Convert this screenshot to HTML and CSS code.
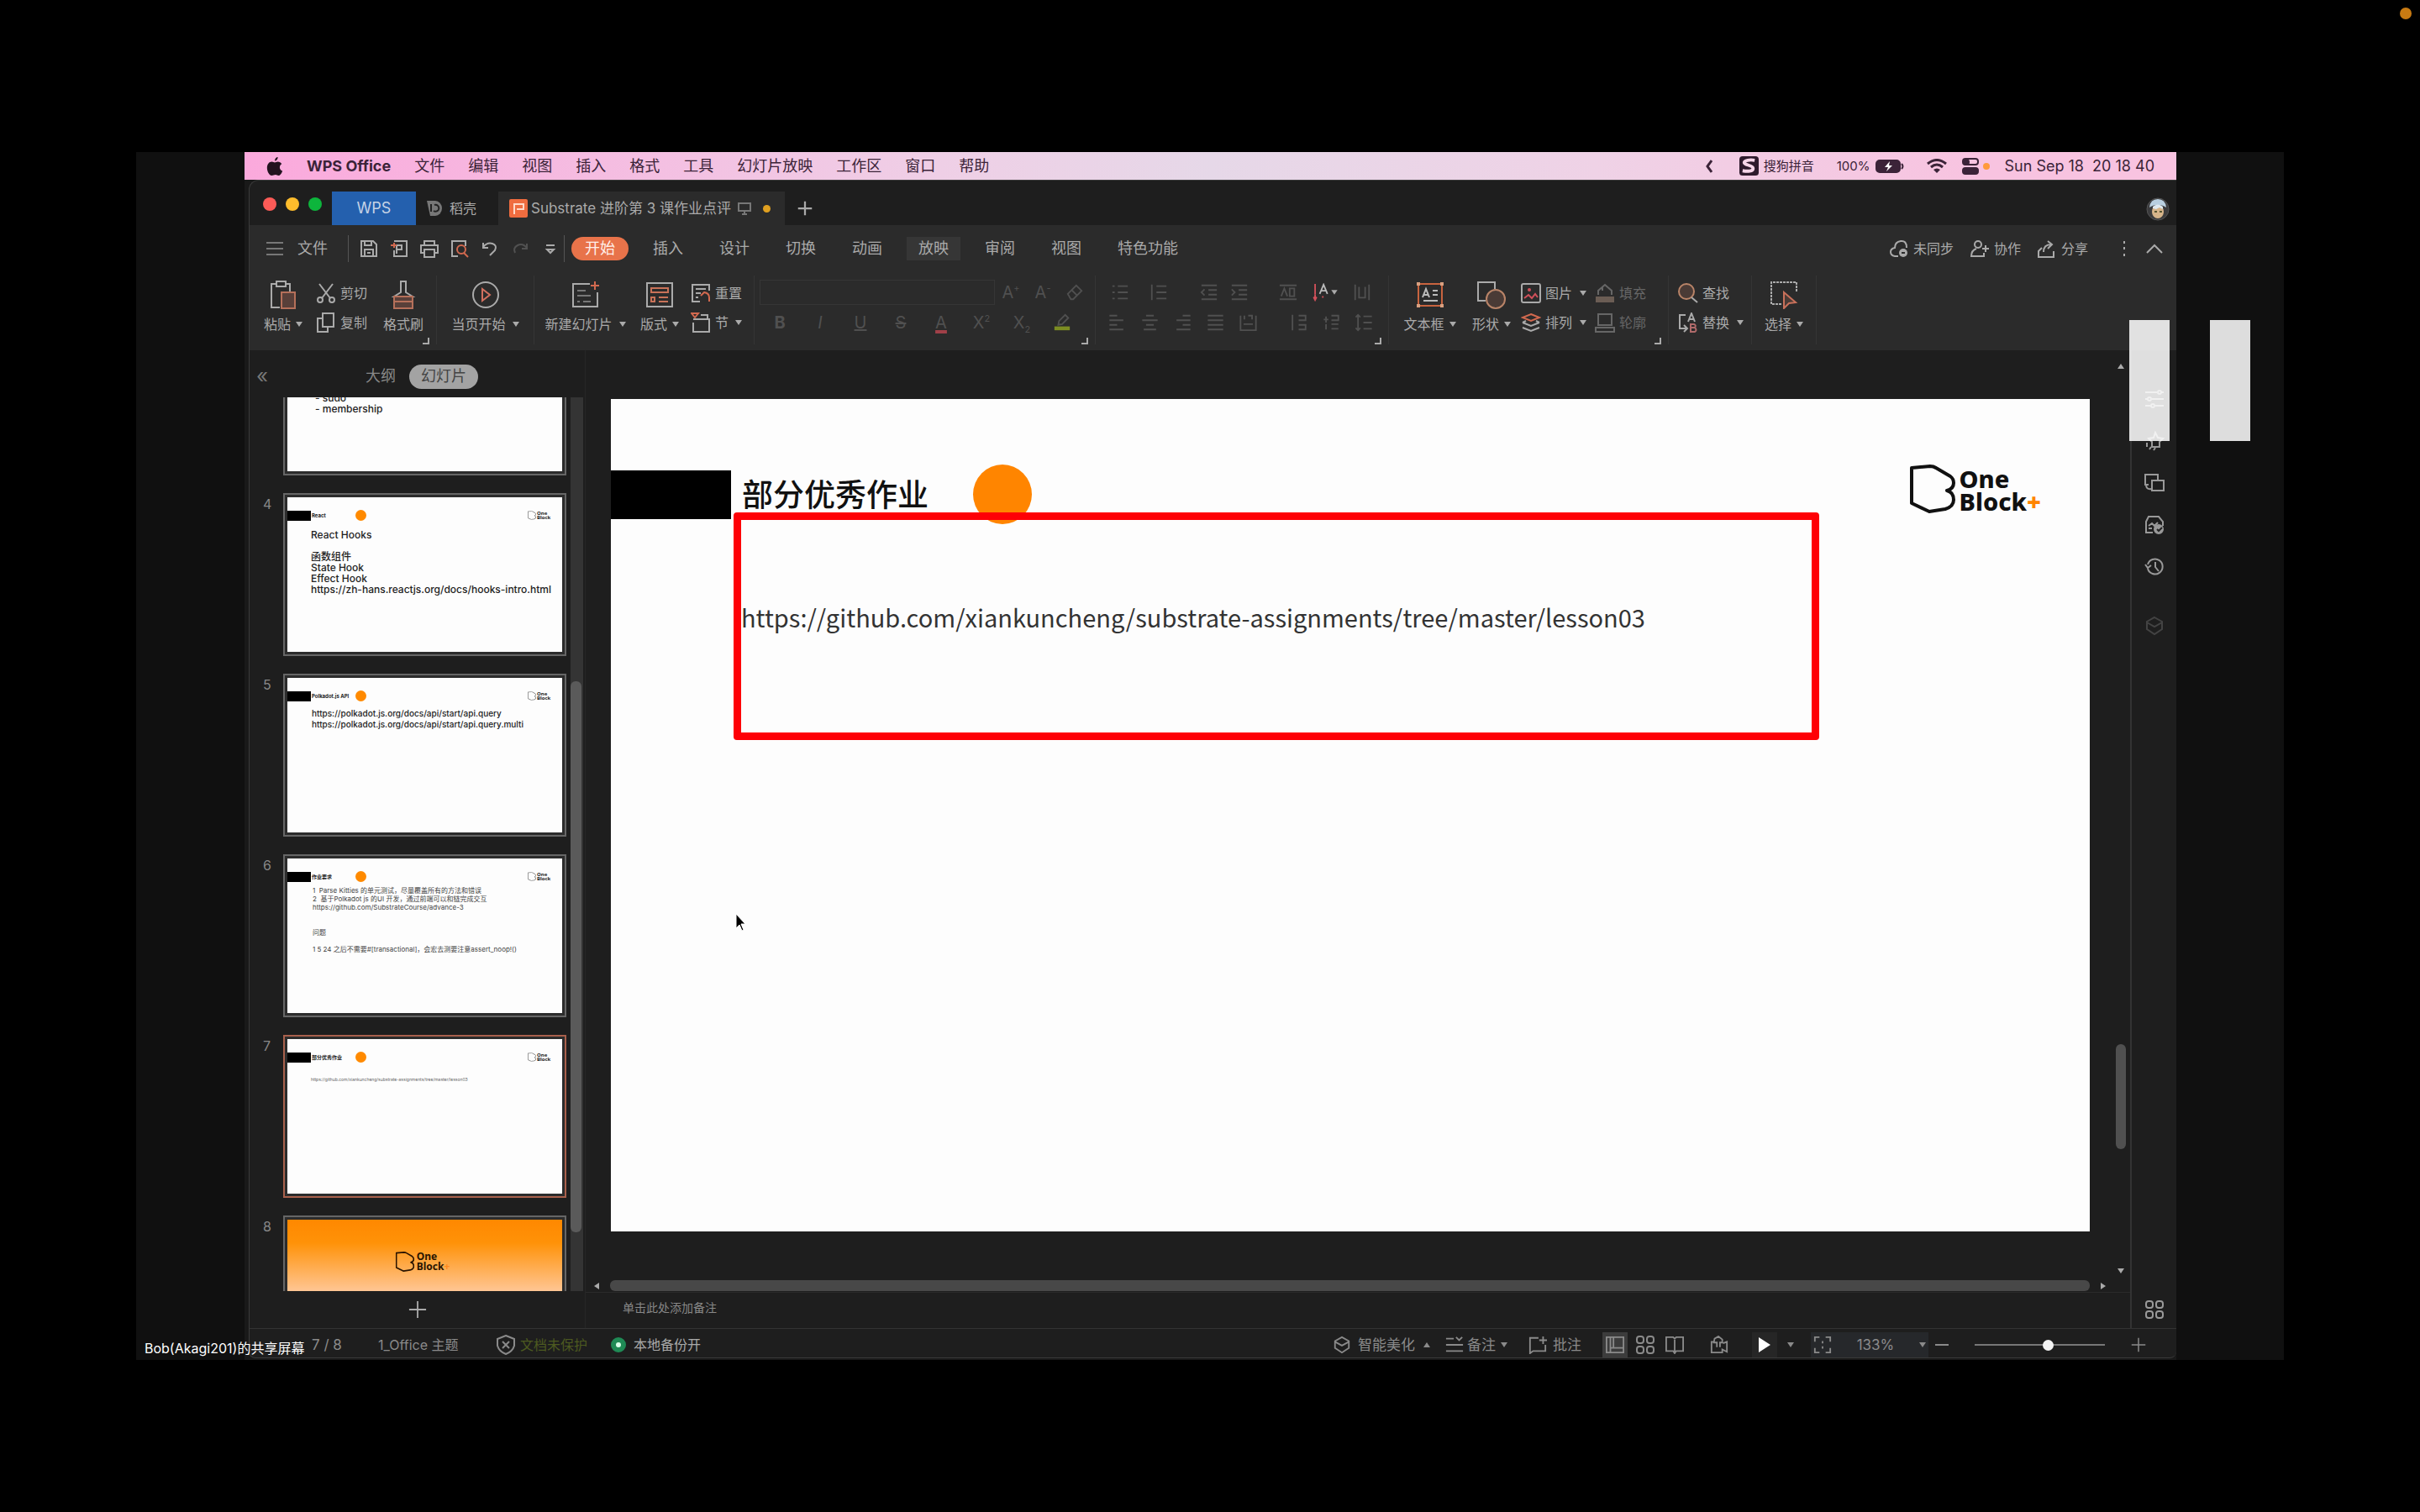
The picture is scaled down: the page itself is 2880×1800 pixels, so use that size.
FILE: index.html
```html
<!DOCTYPE html>
<html lang="zh-CN">
<head>
<meta charset="utf-8">
<title>Substrate 进阶第 3 课作业点评</title>
<link rel="stylesheet" href="styles.css">
</head>
<body>
<svg class="defs" aria-hidden="true">
  <symbol id="caret" viewBox="0 0 8 6"><path d="M0 0h8L4 6z" fill="currentColor" stroke="none"/></symbol>
  <symbol id="corner" viewBox="0 0 8 8"><path d="M7 0v7H0" /></symbol>
  <symbol id="plus" viewBox="0 0 24 24"><path d="M12 1v22M1 12h22"/></symbol>
  <symbol id="logo-mark" viewBox="0 0 54 58"><path d="M2 4 24 2q4 0 7 2l17 10q4 3 4 8 0 7-8 9 8 2 8 11 0 8-10 11L23 56 2 46z" fill="none" stroke-width="4" stroke-linejoin="round"/></symbol>
  <symbol id="four" viewBox="0 0 22 22"><rect x="1" y="1" width="8" height="8" rx="3"/><rect x="13" y="1" width="8" height="8" rx="3"/><rect x="1" y="13" width="8" height="8" rx="3"/><rect x="13" y="13" width="8" height="8" rx="3"/></symbol>
  <symbol id="cube" viewBox="0 0 24 24"><path d="M12 2l9 5v9l-9 6-9-6V7z M3 8l9 5 9-5"/></symbol>
</svg>

<span class="rec-dot"></span>

<main class="video">
  <div class="screen">
    <nav class="menubar">
      <svg class="apple" viewBox="0 0 20 24"><path d="M14 0c0 3-2 5-4 5 0-3 2-5 4-5zM10 7c1 0 2-1 4-1 2 0 4 1 5 3-4 2-3 8 1 9-1 3-3 6-5 6s-2-1-4-1-3 1-5 1C3 24 0 19 0 14c0-5 3-8 6-8 2 0 3 1 4 1z"/></svg>
      <b>WPS Office</b>
      <a href="#">文件</a><a href="#">编辑</a><a href="#">视图</a><a href="#">插入</a><a href="#">格式</a><a href="#">工具</a><a href="#">幻灯片放映</a><a href="#">工作区</a><a href="#">窗口</a><a href="#">帮助</a>
      <div class="tray">
        <svg class="t-chev" viewBox="0 0 8 16"><path d="M7 1 2 8l5 7"/></svg>
        <span class="ime"><svg viewBox="0 0 24 24"><rect width="24" height="24" rx="4" fill="#2e1a2c" stroke="none"/><path d="M19 5c-6-1-13 0-13 3s11 3 11 7-7 4-13 3" stroke="#f6d5e8" stroke-width="4"/></svg>搜狗拼音</span>
        <span class="batt">100%<svg viewBox="0 0 34 16"><rect x="1" y="1" width="28" height="14" rx="4" fill="#3b2338"/><path d="M31 5q3 3 0 6"/><path d="M17 2l-6 7h4l-2 5 7-7h-4z" fill="#fff" stroke="none"/></svg></span>
        <svg class="wifi" viewBox="0 0 24 18"><path d="M1 6q11-9 22 0M5 10q7-6 14 0" stroke-width="3"/><path d="M12 17l-4-4q4-3 8 0z" fill="currentColor" stroke="none"/></svg>
        <span class="cc"><svg viewBox="0 0 20 20"><rect x="1" y="1" width="18" height="7" rx="3"/><circle cx="5" cy="5" r="3" fill="currentColor"/><rect x="1" y="12" width="18" height="7" rx="3" fill="currentColor"/></svg><i></i></span>
        <time>Sun Sep 18&nbsp; 20 18 40</time>
      </div>
    </nav>

    <div class="window">
      <header class="titlebar">
        <div class="lights"><i class="red"></i><i class="yellow"></i><i class="green"></i></div>
        <button class="tab home">WPS</button>
        <button class="tab docer"><svg viewBox="0 0 18 20"><path d="M0 1h10a8 9 0 0 1 0 18H4z" fill="#777" stroke="none"/><path d="M5 5v9M9 6a4 4 0 1 1-1 7" stroke="#222"/></svg>稻壳</button>
        <button class="tab doc"><svg class="p-ico" viewBox="0 0 22 22"><rect width="22" height="22" rx="2" fill="#ef6c3f" stroke="none"/><path d="M6 18V6h11v6H9" stroke="#ffd9c8"/></svg>Substrate 进阶第 3 课作业点评<svg class="mon" viewBox="0 0 16 16"><path d="M1 2h14v9H1zM8 11v4M5 15h6"/></svg><i></i></button>
        <button class="newtab" aria-label="新建"><svg viewBox="0 0 24 24"><use href="#plus"/></svg></button>
        <svg class="avatar" viewBox="0 0 28 28"><circle cx="14" cy="14" r="13" fill="#3b3b3d" stroke="#555" stroke-width="1"/><path d="M4 12q1-10 10-10t10 10q-4-3-10-3T4 12z" fill="#b9cfe0" stroke="none"/><ellipse cx="14" cy="17" rx="7" ry="8" fill="#d6b48a" stroke="none"/><path d="M8 11q6-5 12 0v3l-4-2-4 2-4-1z" fill="#dfe9f0" stroke="none"/><path d="M10 17h3M16 17h3" stroke="#553"/></svg>
      </header>

      <section class="ribbon">
        <div class="tabsrow">
          <button class="filebtn"><svg viewBox="0 0 20 16"><path d="M0 1h20M0 8h20M0 15h20"/></svg>文件</button>
          <div class="quick">
            <svg viewBox="0 0 22 22"><path d="M2 2h14l4 4v14H2zM6 2v5h8V2M6 20v-8h10v8M9 16h4"/></svg>
            <svg viewBox="0 0 22 22"><path d="M5 2h15v18H5v-7M8 17V7h6v5h-5"/><path d="M1 7h7M5 4v6" stroke="#d2694f"/></svg>
            <svg viewBox="0 0 22 22"><path d="M5 7V2h12v5M5 16H1V7h20v9h-4M5 12h12v9H5z"/></svg>
            <svg viewBox="0 0 22 22"><path d="M9 20H2V2h16v6"/><circle cx="13" cy="12" r="5" stroke="#d2694f"/><path d="M16 16l5 5" stroke="#d2694f"/></svg>
            <svg viewBox="0 0 22 22"><path d="M3 4v6h6M3 9q5-6 11-4t3 8l-6 6"/></svg>
            <svg class="off" viewBox="0 0 22 22"><path d="M19 5v6h-6M19 10Q14 4 8 7t-3 9"/></svg>
            <svg viewBox="0 0 22 22"><path d="M6 7h10M7 12h8l-4 4z"/></svg>
          </div>
          <div class="rtabs"><button class="on">开始</button><button>插入</button><button>设计</button><button>切换</button><button>动画</button><button class="hover">放映</button><button>审阅</button><button>视图</button><button>特色功能</button></div>
          <div class="rright">
            <button><svg viewBox="0 0 22 22"><path d="M10 20H6q-5-1-5-5t5-5q0-7 7-8t7 8"/><circle cx="16" cy="16" r="5" fill="currentColor" stroke="none"/><path d="M14 16h4" stroke="#2b2b2b"/></svg>未同步</button>
            <button><svg viewBox="0 0 22 22"><circle cx="9" cy="6" r="4"/><path d="M7 11q-6 2-6 9h15v-4M18 7v8M14 11h8"/></svg>协作</button>
            <button><svg viewBox="0 0 22 22"><path d="M5 10l-4 4v7h18v-7M7 15q0-9 9-9M12 2l5 4-5 5"/></svg>分享</button>
            <svg class="dots" viewBox="0 0 4 20"><path d="M2 1v3M2 8v3M2 16v3"/></svg>
            <svg class="up" viewBox="0 0 20 12"><path d="M1 11 10 2l9 9"/></svg>
          </div>
        </div>

        <div class="tools">
          <div class="group g1">
            <button class="big paste"><svg viewBox="0 0 34 34"><path d="M13 32H3V4h7M19 4h6v9M9 1h11v6H9z"/><path d="M15 14h16v19H15z" fill="#59403a" stroke="#b5705a"/></svg><span>粘贴<svg class="car"><use href="#caret"/></svg></span></button>
            <div class="col cut">
              <button><svg viewBox="0 0 24 24"><path d="M4 1l13 17M20 1L7 18"/><circle cx="5" cy="20" r="3"/><circle cx="19" cy="20" r="3"/></svg>剪切</button>
              <button><svg viewBox="0 0 24 24"><path d="M8 1h13v16H8zM8 7H2v16h12v-6"/></svg>复制</button>
            </div>
            <button class="big brush"><svg viewBox="0 0 34 34"><path d="M14 14V1h6v13l8 5H6z"/><path d="M6 19h22v14H6z" fill="#59403a" stroke="#b5705a"/><path d="M6 25h22" stroke="#b5705a"/></svg><span>格式刷</span></button>
            <svg class="corner"><use href="#corner"/></svg>
          </div>
          <div class="group g2">
            <button class="big"><svg viewBox="0 0 34 34"><circle cx="17" cy="17" r="15"/><path d="M13 10v14l9-7z" stroke="#d2705f"/></svg><span>当页开始<svg class="car far"><use href="#caret"/></svg></span></button>
          </div>
          <div class="group g3">
            <button class="big newslide"><svg viewBox="0 0 34 34"><path d="M22 4H2v27h29V14"/><path d="M7 12h10M7 18h16M7 25h3M14 25h9" stroke="#777"/><path d="M28 1v10M23 6h10" stroke="#d2694f"/></svg><span>新建幻灯片<svg class="car far"><use href="#caret"/></svg></span></button>
            <button class="big layout"><svg viewBox="0 0 34 34"><path d="M2 3h30v28H2z"/><path d="M7 9h20v5H7zM7 20h4v5H7zM16 20h11M16 25h11" stroke="#c87258"/></svg><span>版式<svg class="car"><use href="#caret"/></svg></span></button>
            <div class="col reset">
              <button><svg viewBox="0 0 24 24"><path d="M11 22H2V2h20v7M6 7h12M6 12h6M6 17h3"/><path d="M12 15l4-4q6 1 6 6v5" stroke="#d2694f"/></svg>重置</button>
              <button><svg viewBox="0 0 24 24"><path d="M3 12v11h19V8H3M12 3h8v5"/><path d="M1 1h8L5 6z" stroke="#d2694f"/></svg>节<svg class="car"><use href="#caret"/></svg></button>
            </div>
          </div>
          <div class="group g4">
            <div class="line"><input class="fontbox" aria-label="字体"><span class="cells w38 dim"><span>A<sup>+</sup></span><span>A<sup>-</sup></span><svg viewBox="0 0 24 24"><path d="M3 14 14 3l7 7-11 11H7zM8 9l7 7"/></svg></span></div>
            <div class="line cells w48 dim"><b>B</b><em>I</em><u>U</u><s>S</s><span class="fc">A</span><span>X<sup>2</sup></span><span>X<sub>2</sub></span><svg viewBox="0 0 24 24"><path d="M7 15l1-5 8-8 4 4-8 8z"/><path d="M2 17h20v5H2z" fill="#7c8c22" stroke="none"/></svg></div>
            <svg class="corner"><use href="#corner"/></svg>
          </div>
          <div class="group g5">
            <div class="line spread dim">
              <span class="cells w46"><svg viewBox="0 0 24 24"><path d="M2 4h3M9 4h13M2 12h3M9 12h13M2 20h3M9 20h13"/></svg><svg viewBox="0 0 24 24"><path d="M3 2v20M9 4h13M9 12h13M9 20h13"/></svg></span>
              <span class="cells w36"><svg viewBox="0 0 24 24"><path d="M2 3h20M11 9h11M11 15h11M2 21h20M6 8l-4 4 4 4"/></svg><svg viewBox="0 0 24 24"><path d="M2 3h20M11 9h11M11 15h11M2 21h20M2 8l4 4-4 4"/></svg></span>
              <span class="cells w40"><svg viewBox="0 0 24 24"><path d="M1 3h22M1 21h22M3 17l4-10 4 10M14 7v10h6V7z"/></svg><svg class="lit" viewBox="0 0 32 24"><path d="M3 1v14M13 17v2" stroke="#d2505a"/><path d="M3 15v6M1 18l2 4 2-4" stroke="#d2505a"/><path d="M9 14l5-12 5 12M11 10h6" stroke="#bbb"/><path d="M24 9h8l-4 6z" fill="#aaa" stroke="none"/></svg><svg viewBox="0 0 24 24"><path d="M3 2v20M21 2v20M8 5v14h8V5"/></svg></span>
            </div>
            <div class="line spread dim">
              <span class="cells w39"><svg viewBox="0 0 24 24"><path d="M2 3h10M2 9h18M2 15h10M2 21h18"/></svg><svg viewBox="0 0 24 24"><path d="M7 3h10M2 9h20M7 15h10M4 21h16"/></svg><svg viewBox="0 0 24 24"><path d="M12 3h10M4 9h18M12 15h10M4 21h18"/></svg><svg viewBox="0 0 24 24"><path d="M2 3h20M2 9h20M2 15h20M2 21h20"/></svg><svg viewBox="0 0 24 24"><path d="M2 3v19h20V3M7 3v5M12 3h5v5M6 14h12"/></svg></span>
              <span class="cells w39"><svg viewBox="0 0 24 24"><path d="M4 2v20M12 3h9v6h-9M12 15h9v6h-9"/></svg><svg viewBox="0 0 24 24"><path d="M2 8h6M5 4v8M12 3h9v6h-9M12 14h9M5 14v7M12 20h9"/></svg><svg viewBox="0 0 24 24"><path d="M4 2v20M1 5l3-3 3 3M1 19l3 3 3-3M11 4h11M11 12h11M11 20h11"/></svg></span>
            </div>
            <svg class="corner"><use href="#corner"/></svg>
          </div>
          <div class="group g6">
            <button class="big textbox"><svg viewBox="0 0 34 34"><path d="M3 4h28v26H3z" stroke="#c8643f"/><path d="M1 2h4v4H1zM29 2h4v4h-4zM1 28h4v4H1zM29 28h4v4h-4z" fill="#d8a080" stroke="none"/><path d="M8 20l4-10 4 10M10 17h5M20 12h6M20 17h6M9 24h17" stroke="#bbb"/></svg><span>文本框<svg class="car"><use href="#caret"/></svg></span></button>
            <button class="big shape"><svg viewBox="0 0 34 34"><path d="M10 24H1V2h20v8"/><circle cx="22" cy="22" r="11" fill="#4a3b36" stroke="#b98468"/></svg><span>形状<svg class="car"><use href="#caret"/></svg></span></button>
            <div class="col pic">
              <button><svg viewBox="0 0 24 24"><rect x="1" y="1" width="22" height="22" rx="2"/><circle cx="10" cy="8" r="2" fill="#d2505a" stroke="none"/><path d="M4 18l5-4 4 4 4-5 3 4" stroke="#d2505a"/></svg>图片<svg class="car far"><use href="#caret"/></svg></button>
              <button><svg viewBox="0 0 24 24"><path d="M12 2l10 4-10 4L2 6z" stroke="#d2694f"/><path d="M2 12l10 4 10-4M2 18l10 4 10-4M2 12l4-2M22 12l-4-2"/></svg>排列<svg class="car far"><use href="#caret"/></svg></button>
            </div>
            <div class="col fill">
              <button disabled><svg viewBox="0 0 24 24"><path d="M4 14V9l8-7 8 7v5M9 5v4"/><path d="M1 16h22v7H1z" fill="#6b5d54" stroke="none"/></svg>填充</button>
              <button disabled><svg viewBox="0 0 24 24"><path d="M4 15V2h16v13zM1 18h22v5H1z"/></svg>轮廓</button>
            </div>
            <svg class="corner"><use href="#corner"/></svg>
          </div>
          <div class="group g7">
            <div class="col find">
              <button><svg viewBox="0 0 24 24"><circle cx="10" cy="10" r="9" fill="#4a3b36" stroke="#b98468"/><path d="M16 17l7 6"/></svg>查找</button>
              <button><svg viewBox="0 0 24 24"><path d="M9 3H2v16h8M7 15l4 4-4 4M12 11l4-10 4 10M14 8h4"/><path d="M15 14v9h5q3-2 0-5 2-3-1-4zM15 18h5" stroke="#b06a6a"/></svg>替换<svg class="car far"><use href="#caret"/></svg></button>
            </div>
          </div>
          <div class="group g8">
            <button class="big"><svg viewBox="0 0 34 34"><path d="M14 28H2V2h30v12" stroke-dasharray="3 1"/><path d="M17 14l14 12-8 1-6 6z" fill="#4a3b36" stroke="#c8705a"/></svg><span>选择<svg class="car"><use href="#caret"/></svg></span></button>
          </div>
        </div>
      </section>

      <div class="work">
        <div class="center">
          <aside class="panel">
            <div class="ptabs"><span class="fold">«</span><button>大纲</button><button class="on">幻灯片</button></div>
            <div class="plist">
              <ol class="thumbs">
                <li class="cut-top"><span></span><div class="thumb"><div class="paper mem">- sudo<br>- membership</div></div></li>
                <li><span>4</span><div class="thumb"><div class="paper"><div class="head"><i class="bar"></i><b>React</b><i class="dot"></i><svg class="mini" viewBox="0 0 54 58"><use href="#logo-mark"/></svg><em>One<br>Block</em></div>
                  <p class="t4">React Hooks<br><br>函数组件<br>State Hook<br>Effect Hook<br>https://zh-hans.reactjs.org/docs/hooks-intro.html</p></div></div></li>
                <li><span>5</span><div class="thumb"><div class="paper"><div class="head"><i class="bar"></i><b>Polkadot.js API</b><i class="dot"></i><svg class="mini" viewBox="0 0 54 58"><use href="#logo-mark"/></svg><em>One<br>Block</em></div>
                  <p class="t5">https://polkadot.js.org/docs/api/start/api.query<br>https://polkadot.js.org/docs/api/start/api.query.multi</p></div></div></li>
                <li><span>6</span><div class="thumb"><div class="paper"><div class="head"><i class="bar"></i><b>作业要求</b><i class="dot"></i><svg class="mini" viewBox="0 0 54 58"><use href="#logo-mark"/></svg><em>One<br>Block</em></div>
                  <div class="t6"><p>1&nbsp; Parse Kitties 的单元测试，尽量覆盖所有的方法和错误<br>2&nbsp; 基于Polkadot js 的UI 开发，通过前端可以和链完成交互<br>https://github.com/SubstrateCourse/advance-3</p><p>问题</p><p>1 5 24 之后不需要#[transactional]，会宏去测要注意assert_noop!()</p></div></div></div></li>
                <li class="sel"><span>7</span><div class="thumb"><div class="paper"><div class="head"><i class="bar"></i><b>部分优秀作业</b><i class="dot"></i><svg class="mini" viewBox="0 0 54 58"><use href="#logo-mark"/></svg><em>One<br>Block</em></div>
                  <p class="t7">https://github.com/xiankuncheng/substrate-assignments/tree/master/lesson03</p></div></div></li>
                <li><span>8</span><div class="thumb"><div class="paper cover"><svg viewBox="0 0 54 58"><use href="#logo-mark"/></svg><b>One<br>Block<i>+</i></b></div></div></li>
              </ol>
              <div class="vtrack"><i></i></div>
            </div>
            <button class="add" aria-label="新建幻灯片"><svg viewBox="0 0 24 24"><use href="#plus"/></svg></button>
          </aside>

          <section class="stage">
            <div class="canvas">
              <article class="slide">
                <div class="shead"><i class="bar"></i><h1>部分优秀作业</h1><i class="dot"></i>
                  <div class="brand"><svg viewBox="0 0 54 58"><use href="#logo-mark"/></svg><b>One<br>Block<i>+</i></b></div></div>
                <a class="url" href="#">https://github.com/xiankuncheng/substrate-assignments/tree/master/lesson03</a>
                <div class="mark"></div>
                <svg class="cursor" viewBox="0 0 12 22"><path d="M1 1v17l4-4 3 7 2-1-3-7h5z" fill="#000" stroke="#fff" stroke-width="1"/></svg>
              </article>
              <div class="vbar"><svg class="tri flip"><use href="#caret"/></svg><i></i><svg class="tri"><use href="#caret"/></svg></div>
            </div>
            <div class="hbar"><svg class="tri left"><use href="#caret"/></svg><i></i><svg class="tri right"><use href="#caret"/></svg></div>
            <div class="notes">单击此处添加备注</div>
          </section>

          <aside class="side">
            <svg viewBox="0 0 24 24"><path d="M1 4h14M19 4h4M1 12h3M9 12h14M1 20h7M13 20h10"/><circle cx="18" cy="4" r="2"/><circle cx="6" cy="12" r="2"/><circle cx="10" cy="20" r="2"/></svg>
            <svg viewBox="0 0 24 24"><path d="M13 2l3 6 6 1-4 4v6h-9v-6L5 9l6-1zM3 14v5M6 22l2-3M11 23l2-3"/></svg>
            <svg viewBox="0 0 24 24"><path d="M9 9h14v12H9zM5 14H1V2h15v7M2 14q0 6 6 5"/></svg>
            <svg viewBox="0 0 24 24"><path d="M10 21H2V8l3-6h12l5 6v5M5 13l4-3 3 3 4-4M5 16h4"/><circle cx="17" cy="17" r="5" fill="#999"/><path d="M15 17l2 2 4-4" stroke="#222"/></svg>
            <svg viewBox="0 0 24 24"><path d="M4 14a9 9 0 1 0 0-5M1 9l3 4 4-3M13 6v6l4 5"/></svg>
            <svg class="faint" viewBox="0 0 24 24"><use href="#cube"/></svg>
            <svg class="last" viewBox="0 0 22 22"><use href="#four"/></svg>
          </aside>
        </div>

        <footer class="status">
          <span class="page">7 / 8</span><span class="theme">1_Office 主题</span>
          <span class="prot"><svg viewBox="0 0 24 24"><path d="M12 1l10 4v8q-2 7-10 10Q4 20 2 13V5zM8 8l8 8M16 8l-8 8"/></svg>文档未保护</span>
          <span class="bak"><i></i>本地备份开</span>
          <div class="sright">
            <button class="s1"><svg viewBox="0 0 24 24"><use href="#cube"/></svg>智能美化<svg class="car flip"><use href="#caret"/></svg></button>
            <button class="s2"><svg viewBox="0 0 24 24"><path d="M1 4h10M1 12h22M1 20h22M14 2l4 4 4-4"/></svg>备注<svg class="car"><use href="#caret"/></svg></button>
            <button class="s3"><svg viewBox="0 0 24 24"><path d="M13 3H2v20l4-3h16v-8M19 1v10M14 6h10"/></svg>批注</button>
            <button class="s4" aria-label="普通视图"><svg viewBox="0 0 24 24"><path d="M1 2h22v20H1zM6 2v20M6 16h17M10 2v14"/></svg></button>
            <button class="s5" aria-label="浏览"><svg viewBox="0 0 22 22"><use href="#four"/></svg></button>
            <button class="s6" aria-label="阅读"><svg viewBox="0 0 24 24"><path d="M1 2h9l2 2 2-2h9v18h-9l-2 3-2-3H1zM12 4v18"/></svg></button>
            <button class="s7" aria-label="录制"><svg viewBox="0 0 24 24"><path d="M5 8H2v14h14v-4l6 3V8l-5 2M9 15V9H5l1-5 5-3 5 4v4h-3v6"/></svg></button>
            <button class="s8" aria-label="放映"><svg viewBox="0 0 14 18"><path d="M0 0l14 9-14 9z" fill="#fff" stroke="none"/></svg></button>
            <svg class="car s9"><use href="#caret"/></svg>
            <button class="zoomb"><svg viewBox="0 0 24 24"><path d="M8 2H2v6M16 2h6v6M2 16v6h6M22 16v6h-6M12 7v3M12 14v3"/></svg><span>133%</span><svg class="car"><use href="#caret"/></svg></button>
            <button class="sm" aria-label="缩小"><svg viewBox="0 0 18 18"><path d="M1 9h16"/></svg></button>
            <input type="range" min="0" max="100" value="57" aria-label="缩放">
            <button class="sp" aria-label="放大"><svg viewBox="0 0 24 24"><use href="#plus"/></svg></button>
          </div>
        </footer>
      </div>
    </div>
  </div>
  <div class="sharer">Bob(Akagi201)的共享屏幕</div>
  <button class="pause" aria-label="暂停"><i></i><i></i></button>
</main>
</body>
</html>
```

FILE: styles.css
```css
* { box-sizing: border-box; }
body {
  margin: 0; height: 100vh; padding: 181px 162px;
  display: flex; background: #000; color: #aaa;
  font: 16px/20px Inter, "Noto Sans CJK SC", sans-serif;
}
button { border: 0; padding: 0; background: none; color: inherit; font: inherit; display: flex; align-items: center; white-space: nowrap; }
a { color: inherit; text-decoration: none; }
svg { fill: none; stroke: currentColor; stroke-width: 2; flex: none; display: block; }
p, h1, ol { margin: 0; padding: 0; }
.defs { position: absolute; width: 0; height: 0; }
.rec-dot { position: absolute; top: 9px; right: 10px; width: 14px; height: 14px; border-radius: 50%; background: #c87a12; }

.video { position: relative; flex: 1; min-width: 0; display: flex; padding: 0 128px 0 129px; background: #101010; }
.screen { flex: 1; min-width: 0; display: flex; flex-direction: column; background: #191919; }

.menubar {
  height: 33px; display: flex; align-items: center; gap: 28px; padding: 0 26px;
  background: linear-gradient(90deg, #fba9dc, #efcfe6 36%, #e6d8e8 50%, #efd2e6 70%, #f8c3e0 90%);
  color: #3b2338; font-size: 18px; white-space: nowrap;
}
.apple { width: 20px; height: 22px; fill: #22121f; stroke: none; }
.menubar b { font-size: 18px; }
.tray { margin-left: auto; display: flex; align-items: center; }
.t-chev { width: 8px; height: 16px; margin-right: 32px; stroke-width: 3; }
.ime { display: flex; align-items: center; gap: 6px; font-size: 15px; margin-right: 27px; }
.ime svg { width: 23px; height: 23px; }
.batt { display: flex; align-items: center; gap: 6px; font-size: 15px; margin-right: 27px; }
.batt svg { width: 34px; height: 16px; }
.wifi { width: 24px; height: 18px; margin-right: 18px; }
.cc { display: flex; align-items: center; gap: 5px; margin-right: 18px; }
.cc svg { width: 20px; height: 20px; }
.cc i { width: 8px; height: 8px; border-radius: 50%; background: #ff9a3c; }

.window { flex: 1; min-height: 0; display: flex; flex-direction: column; margin: 0 0 2px 5px; border: 1px solid #3a3a3a; border-right: 0; border-radius: 12px 0 8px 8px; background: #1e1e1e; overflow: hidden; }
.titlebar { height: 53px; display: flex; align-items: flex-end; padding: 0 8px 0 16px; }
.lights { display: flex; gap: 11px; width: 82px; height: 33px; }
.lights i { width: 16px; height: 16px; border-radius: 50%; }
.red { background: #fc5b57; } .yellow { background: #fdbc2c; } .green { background: #0db53c; }
.tab { height: 40px; }
.home { width: 100px; justify-content: center; background: #2460ae; color: #c6d3e6; font-size: 18px; }
.docer { width: 98px; padding-left: 13px; gap: 9px; }
.docer svg { width: 18px; height: 20px; }
.doc { width: 341px; padding-left: 13px; gap: 4px; background: #2b2b2b; font-size: 17px; }
.p-ico { width: 22px; height: 24px; }
.mon { width: 16px; height: 18px; margin-left: 4px; stroke: #777; }
.doc i { width: 9px; height: 9px; border-radius: 50%; background: #e0a020; margin-left: 10px; }
.newtab { height: 40px; padding-left: 15px; }
.newtab svg { width: 18px; height: 18px; stroke-width: 3; }
.avatar { width: 28px; height: 28px; margin: 0 0 5px auto; }

.ribbon { background: #2b2b2b; height: 149px; flex: none; }
.tabsrow { height: 56px; display: flex; align-items: center; padding-right: 16px; font-size: 18px; }
.filebtn { width: 118px; height: 32px; padding-left: 20px; gap: 17px; border-right: 1px solid #555; }
.filebtn svg { width: 20px; height: 16px; stroke: #777; }
.quick { width: 257px; height: 32px; display: flex; align-items: center; gap: 14px; padding-left: 13px; border-right: 1px solid #555; }
.quick svg { width: 22px; height: 22px; }
.off { opacity: .3; }
.rtabs { display: flex; gap: 15px; padding-left: 8px; }
.rtabs button { height: 28px; padding: 0 14px; }
.rtabs .on { background: #e8734a; color: #fff0ea; border-radius: 14px; padding: 0 16px; }
.rtabs .hover { background: #363636; }
.rright { margin-left: auto; display: flex; align-items: center; gap: 20px; font-size: 16px; }
.rright button { gap: 6px; }
.rright svg { width: 22px; height: 22px; }
.rright .dots { width: 4px; height: 20px; margin: 0 4px 0 21px; }
.rright .up { width: 20px; height: 12px; }

.tools { display: flex; height: 86px; padding: 4px 0 0 8px; }
.group { position: relative; display: flex; border-right: 1px solid #353535; }
.corner { position: absolute; right: 8px; bottom: 0; width: 8px; height: 8px; }
.big { height: 70px; flex: 1; flex-direction: column; justify-content: flex-end; gap: 6px; line-height: 20px; }
.big > svg { width: 34px; height: 34px; }
.big > span { display: flex; align-items: center; line-height: 24px; }
.car { width: 8px; height: 6px; margin-left: 6px; }
.far { margin-left: 8px; }
.col { display: flex; flex-direction: column; padding-top: 8px; gap: 9px; }
.col button { height: 26px; gap: 5px; }
.col button > svg:first-child { width: 24px; height: 24px; }
.col button .car { margin-left: 3px; }
.col button .far { margin-left: 4px; }
.col button:disabled { color: #666; }
.g1 { width: 215px; padding-right: 6px; }
.paste { flex: 0 0 64px; }
.cut { width: 78px; padding-left: 7px; }
.g2 { width: 116px; }
.g3 { width: 262px; }
.layout { flex: 0 0 56px; }
.reset { width: 84px; padding-left: 9px; }
.g4 { width: 406px; flex-direction: column; padding: 5px 0 0 6px; gap: 6px; }
.line { display: flex; height: 30px; align-items: center; }
.fontbox { width: 280px; height: 30px; border: 1px solid #363636; background: #2b2b2b; color: #888; font: inherit; }
.cells { display: flex; align-items: center; }
.cells > * { text-align: center; height: 22px; line-height: 22px; font-size: 20px; }
.cells sup, .cells sub { font-size: 11px; line-height: 0; }
.w38 > * { width: 38px; } .w48 > * { width: 48px; } .w46 > * { width: 46px; }
.w36 > * { width: 36px; } .w40 > * { width: 44px; } .w39 > * { width: 39px; }
.dim { color: #505050; }
.fc { text-decoration: underline 4px #a04048; }
.g5 { width: 349px; flex-direction: column; padding: 5px 9px 0 6px; gap: 6px; }
.spread { justify-content: space-between; }
.g6 { width: 333px; }
.shape { flex: 0 0 50px; }
.pic { width: 98px; padding-left: 10px; }
.fill { width: 87px; }
.g7 { width: 99px; padding-left: 11px; }
.g8 { width: 77px; }

.work { flex: 1; min-height: 0; display: flex; flex-direction: column; }
.center { flex: 1; min-height: 0; display: flex; }
.panel { width: 400px; min-height: 0; display: flex; flex-direction: column; border-right: 1px solid #262626; }
.ptabs { display: flex; flex: none; align-items: center; height: 56px; padding: 6px 0 0 8px; font-size: 18px; color: #888; }
.fold { width: 130px; font-size: 24px; color: #777; }
.ptabs .on { height: 29px; margin-left: 16px; padding: 0 14px; border-radius: 15px; background: #a3a3a3; color: #444; }
.plist { flex: 1; min-height: 0; display: flex; overflow: hidden; }
.thumbs { flex: 1; list-style: none; display: flex; flex-direction: column; gap: 21px; padding-left: 16px; }
.thumbs li { display: flex; flex: none; height: 194px; color: #888; }
.thumbs li > span { width: 24px; padding-top: 3px; }
.thumb { width: 337px; border: 2px solid #666; padding: 3px; background: #2c2c2c; }
.sel .thumb { border-color: #a8604c; }
.paper { height: 100%; background: #fdfdfd; color: #222; overflow: hidden; padding-top: 15px; }
.thumbs .cut-top { height: 93px; }
.cut-top .thumb { border-top: 0; padding-top: 0; }
.cut-top .paper { padding: 0 0 0 33px; font: 500 12px/13px Inter, sans-serif; }
.cut-top .paper::before { content: ""; display: block; margin-top: -6px; }
.head { display: flex; align-items: center; height: 13px; padding-right: 10px; }
.head .bar { width: 28px; height: 12px; background: #000; }
.head b { width: 53px; padding-left: 1px; font-size: 6px; line-height: 12px; white-space: nowrap; }
.head .dot { width: 13px; height: 13px; border-radius: 50%; background: #ff8a00; }
.head .mini { width: 10px; height: 11px; margin: 0 1px 0 auto; stroke: #666; }
.head em { width: 20px; font: bold 6px/5px "Noto Sans", sans-serif; }
.t4 { padding: 10px 0 0 28px; font: 500 12px/13px Inter, "Noto Sans CJK SC", sans-serif; white-space: nowrap; }
.t5 { padding: 8px 0 0 29px; font: 500 10px/13px Inter, sans-serif; white-space: nowrap; }
.t6 { padding: 5px 0 0 30px; font: 8px/10px Inter, "Noto Sans CJK SC", sans-serif; color: #444; white-space: nowrap; display: flex; flex-direction: column; gap: 20px; }
.t6 p:last-child { margin-top: -10px; }
.t7 { padding: 15px 0 0 28px; font: 5px/10px Inter, sans-serif; color: #666; white-space: nowrap; }
.cover { display: flex; align-items: flex-start; justify-content: center; gap: 2px; padding-top: 38px; color: #2b1500; background: linear-gradient(#ff8800, #ff9208 15%, #ffc797 47%, #fff); }
.cover svg { width: 24px; height: 24px; }
.cover b { font: bold 12px/12px "Noto Sans", sans-serif; padding-right: 6px; }
.cover b i { font-style: normal; color: #ff8a1c; }
.vtrack { width: 15px; margin-right: 2px; background: #343434; padding-top: 338px; }
.vtrack i { display: block; width: 13px; height: 656px; border-radius: 6px; background: #5a5a5a; }
.add { height: 44px; flex: none; padding-left: 189px; }
.add svg { width: 22px; height: 22px; }

.stage { flex: 1; min-width: 0; min-height: 0; display: flex; flex-direction: column; }
.canvas { flex: 1; min-height: 0; display: flex; padding: 0 4px 0 30px; justify-content: space-between; gap: 30px; }
.slide { position: relative; flex: 1; align-self: flex-start; aspect-ratio: 1760 / 991; margin-top: 58px; padding-top: 78px; background: #fdfdfd; color: #111; }
.shead { display: flex; align-items: center; padding-right: 58px; }
.shead .bar { width: 143px; height: 58px; background: #000; }
.shead h1 { width: 288px; padding: 0 0 4px 13px; font: 500 37px/48px "Noto Sans CJK SC", sans-serif; }
.shead .dot { width: 70px; height: 71px; border-radius: 50%; background: #ff8500; }
.brand { align-self: flex-start; margin-left: auto; display: flex; gap: 5px; }
.brand svg { width: 54px; height: 58px; }
.brand b { font: 800 29px/27px "Noto Sans", sans-serif; padding-top: 3px; }
.brand b i { font-style: normal; font-weight: 900; color: #ff8500; }
.url { display: block; padding: 90px 0 0 155px; font: 29px/40px "Noto Sans CJK SC", sans-serif; color: #333; white-space: nowrap; }
.mark { position: absolute; left: 8.3%; top: 13.6%; width: 73.4%; height: 27.4%; border: 9px solid #fe0006; border-radius: 4px; }
.cursor { position: absolute; left: 8.4%; top: 61.8%; width: 12px; height: 22px; }
.vbar { width: 14px; display: flex; flex-direction: column; align-items: center; padding: 16px 0 7px; }
.vbar i { width: 12px; height: 125px; margin: auto 0 142px; border-radius: 6px; background: #505050; }
.tri { width: 8px; height: 6px; }
.flip { transform: rotate(180deg); }
.left { transform: rotate(90deg); }
.right { transform: rotate(-90deg); }
.hbar { height: 16px; flex: none; display: flex; align-items: center; gap: 12px; padding: 0 28px 0 9px; border-bottom: 1px solid #2a2a2a; }
.hbar i { flex: 1; height: 13px; border-radius: 6px; background: #484848; }
.notes { height: 42px; flex: none; padding: 8px 0 0 44px; font-size: 14px; color: #888; }
.side { width: 55px; display: flex; flex-direction: column; align-items: center; gap: 26px; padding: 46px 0 11px; border-left: 2px solid #333; color: #999; }
.side svg { width: 24px; height: 24px; }
.side .faint { opacity: .3; margin-top: 20px; }
.side .last { margin-top: auto; width: 22px; height: 22px; }

.status { height: 35px; flex: none; display: flex; align-items: center; padding: 4px 5px 0 74px; border-top: 1px solid #333; color: #8a8a8a; white-space: nowrap; }
.page { width: 79px; font-size: 17px; }
.theme { width: 140px; }
.prot { width: 137px; display: flex; align-items: center; gap: 5px; color: #4d5a20; }
.prot svg { width: 24px; height: 24px; stroke: #8a8a8a; }
.bak { display: flex; align-items: center; gap: 9px; color: #aaa; }
.bak i { width: 18px; height: 18px; border-radius: 50%; border: 6px solid #1f8a55; background: #d8ffe8; }
.sright { margin-left: auto; display: flex; align-items: center; font-size: 17px; }
.sright button { height: 30px; justify-content: center; }
.sright button > svg:first-child { width: 22px; height: 22px; }
.sright .s1 { width: 134px; justify-content: flex-start; gap: 8px; }
.sright .s2 { width: 99px; justify-content: flex-start; gap: 4px; }
.sright .s3 { width: 88px; justify-content: flex-start; gap: 7px; }
.s1 .car, .s2 .car { margin-left: 2px; }
.s4 { width: 30px; background: #3c3c3c; }
.s5 { width: 42px; } .s6 { width: 28px; } .s7 { width: 78px; }
.s8 { width: 30px; background: #262626; }
.sright .s8 > svg:first-child { width: 14px; height: 18px; }
.s9 { margin: 0 20px 0 12px; }
.zoomb { width: 140px; background: #26282b; }
.zoomb span { width: 104px; text-align: center; }
.zoomb .car { margin: 0; }
.sm { width: 32px; }
.sp { width: 80px; }
.sright .sm > svg:first-child, .sright .sp > svg:first-child { width: 18px; height: 18px; }
input[type="range"] { appearance: none; width: 155px; height: 14px; margin: 0 0 0 23px; background: linear-gradient(#777, #777) center / 100% 2px no-repeat; }
input[type="range"]::-webkit-slider-thumb { appearance: none; width: 13px; height: 13px; border-radius: 50%; background: #f4f4f4; }

.sharer { position: absolute; left: 10px; bottom: 4px; font-size: 16px; line-height: 20px; color: #fff; }
.pause { position: absolute; top: 200px; right: 40px; gap: 48px; }
.pause i { width: 48px; height: 144px; background: rgba(255, 255, 255, .86); }
```
